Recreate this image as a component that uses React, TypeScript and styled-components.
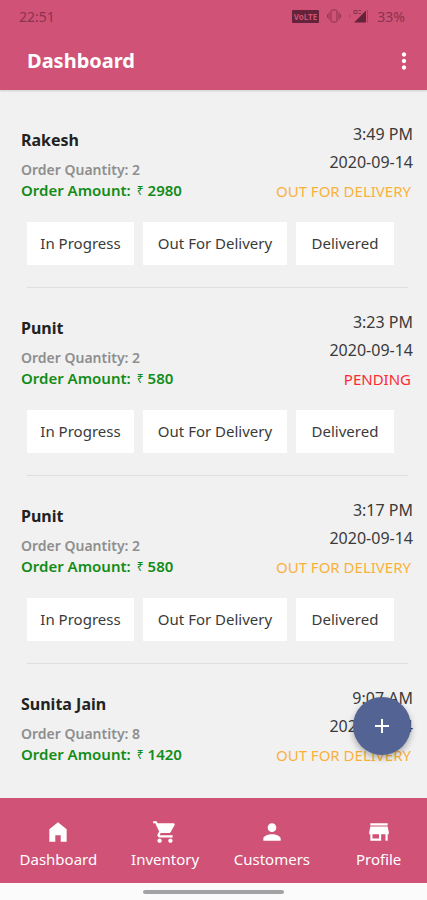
import React from "react";
import styled, { createGlobalStyle } from "styled-components";
import { MdAdd, MdMoreVert } from "react-icons/md";

const GlobalStyle = createGlobalStyle`
  * { box-sizing: border-box; }
  body {
    margin: 0;
    background: #f1f1f1;
    font-family: "Noto Sans", "Open Sans", sans-serif;
    color: #3a3a3a;
  }
  button { font: inherit; border: 0; cursor: pointer; }
`;

const Screen = styled.div`
  height: 100vh;
  display: flex;
  flex-direction: column;
  overflow: hidden;
`;

const Header = styled.header`
  flex: none;
  background: #d05276;
  box-shadow: 0 1px 2px rgba(0, 0, 0, 0.15);
`;

const StatusBar = styled.div`
  height: 32px;
  padding: 0 22px 0 19px;
  display: flex;
  align-items: center;
  justify-content: space-between;
  font-size: 14px;
  color: #8a3350;
`;

const StatusIcons = styled.div`
  display: flex;
  align-items: center;
  gap: 8px;
`;

const StatusSvg = styled.svg`
  display: block;
`;

const TitleBar = styled.div`
  height: 58px;
  padding: 0 10px 0 27px;
  display: flex;
  align-items: center;
  justify-content: space-between;
`;

const Title = styled.h1`
  margin: 0;
  font-size: 20px;
  line-height: 28px;
  font-weight: 700;
  color: #fff;
`;

const MenuButton = styled.button`
  display: flex;
  padding: 0;
  background: none;
  color: #fff;
`;

const Content = styled.div`
  position: relative;
  flex: 1;
  min-height: 0;
  padding-bottom: 16px;
`;

const Orders = styled.main`
  height: 100%;
  overflow: hidden auto;
  scrollbar-width: none;
  padding-top: 10px;
`;

const Order = styled.article`
  padding-top: 20px;
`;

const Summary = styled.div`
  display: flex;
  justify-content: space-between;
  padding: 0 14px 0 21px;
  height: 88px;
`;

const Customer = styled.div`
  padding-top: 8px;
`;

const Name = styled.h2`
  margin: 0 0 8px;
  font-size: 16px;
  line-height: 24px;
  font-weight: 700;
  color: #222;
`;

const Quantity = styled.div`
  font-size: 14px;
  line-height: 20px;
  font-weight: 600;
  color: #8e8e8e;
`;

const Amount = styled.div`
  font-size: 15px;
  line-height: 20px;
  font-weight: 600;
  color: #128c17;
`;

const Rupee = styled.span`
  margin: 0 4px 0 6px;
  font-size: 12px;
  line-height: 12px;
  font-weight: 400;
  vertical-align: 1px;
`;

const Timing = styled.div`
  text-align: right;
  font-size: 16px;
  line-height: 28px;
`;

const Status = styled.div<{ $pending: boolean }>`
  padding: 1px 2px 0 0;
  font-size: 15px;
  line-height: 28px;
  color: ${(p) => (p.$pending ? "#fb2c31" : "#f9b13c")};
`;

const Actions = styled.div`
  display: grid;
  grid-template-columns: 107fr 144fr 98fr;
  gap: 9px;
  padding: 14px 33px 22px 27px;
`;

const ActionButton = styled.button`
  height: 43px;
  padding: 0 0 2px;
  background: #fff;
  color: #3a3a3a;
  font-size: 15px;
  white-space: nowrap;
`;

const Divider = styled.hr`
  height: 1px;
  margin: 0 19px 0 27px;
  border: 0;
  background: #dedede;
`;

const AddButton = styled.button`
  position: absolute;
  right: 16px;
  bottom: 43px;
  width: 58px;
  height: 58px;
  display: flex;
  align-items: center;
  justify-content: center;
  padding: 0;
  border-radius: 50%;
  background: #536394;
  color: #fff;
  box-shadow: 0 3px 6px rgba(0, 0, 0, 0.3);
`;

const Nav = styled.nav`
  flex: none;
  height: 85px;
  display: grid;
  grid-template-columns: repeat(4, 1fr);
  background: #d05276;
`;

const NavLink = styled.a`
  display: flex;
  flex-direction: column;
  align-items: center;
  justify-content: center;
  gap: 2px;
  padding: 8px 0 0 10px;
  color: #fff;
  font-size: 15px;
  line-height: 24px;
  text-decoration: none;
`;

const NavIcon = styled.svg`
  width: 26px;
  height: 26px;
  fill: currentColor;
`;

const GestureArea = styled.div`
  flex: none;
  height: 17px;
  display: flex;
  align-items: center;
  justify-content: center;
  background: #fbfbfb;
`;

const GestureBar = styled.div`
  width: 33%;
  height: 4px;
  border-radius: 2px;
  background: #a3a3a6;
`;

const steps = ["In Progress", "Out For Delivery", "Delivered"];

const orders = [
  { name: "Rakesh", quantity: 2, amount: 2980, time: "3:49 PM", status: "OUT FOR DELIVERY", actions: steps },
  { name: "Punit", quantity: 2, amount: 580, time: "3:23 PM", status: "PENDING", actions: steps },
  { name: "Punit", quantity: 2, amount: 580, time: "3:17 PM", status: "OUT FOR DELIVERY", actions: steps },
  { name: "Sunita Jain", quantity: 8, amount: 1420, time: "9:07 AM", status: "OUT FOR DELIVERY", actions: [] },
];

const links = [
  { label: "Dashboard", path: "M12 3 4 9.500V21h5.500v-6h5v6H20V9.500z" },
  {
    label: "Inventory",
    path: "M7 18c-1.100 0-1.990.9-1.990 2S5.900 22 7 22s2-.9 2-2-.9-2-2-2zM1 2v2h2l3.600 7.590-1.350 2.450c-.16.28-.25.61-.25.96 0 1.100.9 2 2 2h12v-2H7.420c-.14 0-.25-.11-.25-.25l.03-.12.9-1.630h7.450c.75 0 1.410-.41 1.750-1.030l3.580-6.490A1 1 0 0 0 20 4H5.210l-.94-2H1zm16 16c-1.100 0-1.990.9-1.990 2s.89 2 1.990 2 2-.9 2-2-.9-2-2-2z",
  },
  {
    label: "Customers",
    path: "M12 12c2.210 0 4-1.790 4-4s-1.790-4-4-4-4 1.790-4 4 1.790 4 4 4zm0 2c-2.670 0-8 1.340-8 4v2h16v-2c0-2.660-5.330-4-8-4z",
  },
  {
    label: "Profile",
    path: "M20 4H4v2h16V4zm1 10v-2l-1-5H4l-1 5v2h1v6h10v-6h4v6h2v-6h1zm-9 4H6v-4h6v4z",
  },
];

function PhoneStatusIcons() {
  return (
    <StatusIcons>
      <StatusSvg width="27" height="13" viewBox="0 0 27 13" role="img" aria-label="VoLTE">
        <rect width="27" height="13" rx="1" fill="#64233a" />
        <text x="13.5" y="9.5" textAnchor="middle" fontSize="8" fontWeight="700" fill="#d05276">VoLTE</text>
      </StatusSvg>
      <StatusSvg width="14" height="14" viewBox="0 0 14 14" fill="none" stroke="#8a3350" aria-hidden="true">
        <rect x="4" y="1" width="6" height="12" rx="1" />
        <path d="M2 3.5v7M12 3.5v7M.5 5.5v3M13.5 5.5v3" />
      </StatusSvg>
      <StatusSvg width="20" height="14" viewBox="0 0 20 14" aria-hidden="true">
        <path d="M5 13.5 17 1.5V13.5z" fill="#64233a" />
        <path d="M5 1.5h3v3H5zM9.5 1.5h2.5M9.5 4.5H12" stroke="#8a3350" fill="none" />
        <path d="M18.5 1v12.5" stroke="#a83f60" />
        <path d="M0 5.5h1.5v3H0z" fill="#b84868" />
      </StatusSvg>
      <span>33%</span>
    </StatusIcons>
  );
}

export default function App() {
  return (
    <Screen>
      <GlobalStyle />
      <Header>
        <StatusBar>
          <span>22:51</span>
          <PhoneStatusIcons />
        </StatusBar>
        <TitleBar>
          <Title>Dashboard</Title>
          <MenuButton aria-label="More options">
            <MdMoreVert size={26} />
          </MenuButton>
        </TitleBar>
      </Header>
      <Content>
        <Orders>
          {orders.map((order, index) => (
            <Order key={index}>
              <Summary>
                <Customer>
                  <Name>{order.name}</Name>
                  <Quantity>Order Quantity: {order.quantity}</Quantity>
                  <Amount>
                    Order Amount:<Rupee>₹</Rupee>{order.amount}
                  </Amount>
                </Customer>
                <Timing>
                  <div>{order.time}</div>
                  <div>2020-09-14</div>
                  <Status $pending={order.status === "PENDING"}>{order.status}</Status>
                </Timing>
              </Summary>
              {order.actions.length > 0 && (
                <>
                  <Actions>
                    {order.actions.map((action) => (
                      <ActionButton key={action}>{action}</ActionButton>
                    ))}
                  </Actions>
                  <Divider />
                </>
              )}
            </Order>
          ))}
        </Orders>
        <AddButton aria-label="Add order">
          <MdAdd size={24} />
        </AddButton>
      </Content>
      <Nav>
        {links.map(({ label, path }) => (
          <NavLink key={label} href={`#${label.toLowerCase()}`}>
            <NavIcon viewBox="0 0 24 24" aria-hidden="true">
              <path d={path} />
            </NavIcon>
            {label}
          </NavLink>
        ))}
      </Nav>
      <GestureArea>
        <GestureBar />
      </GestureArea>
    </Screen>
  );
}
